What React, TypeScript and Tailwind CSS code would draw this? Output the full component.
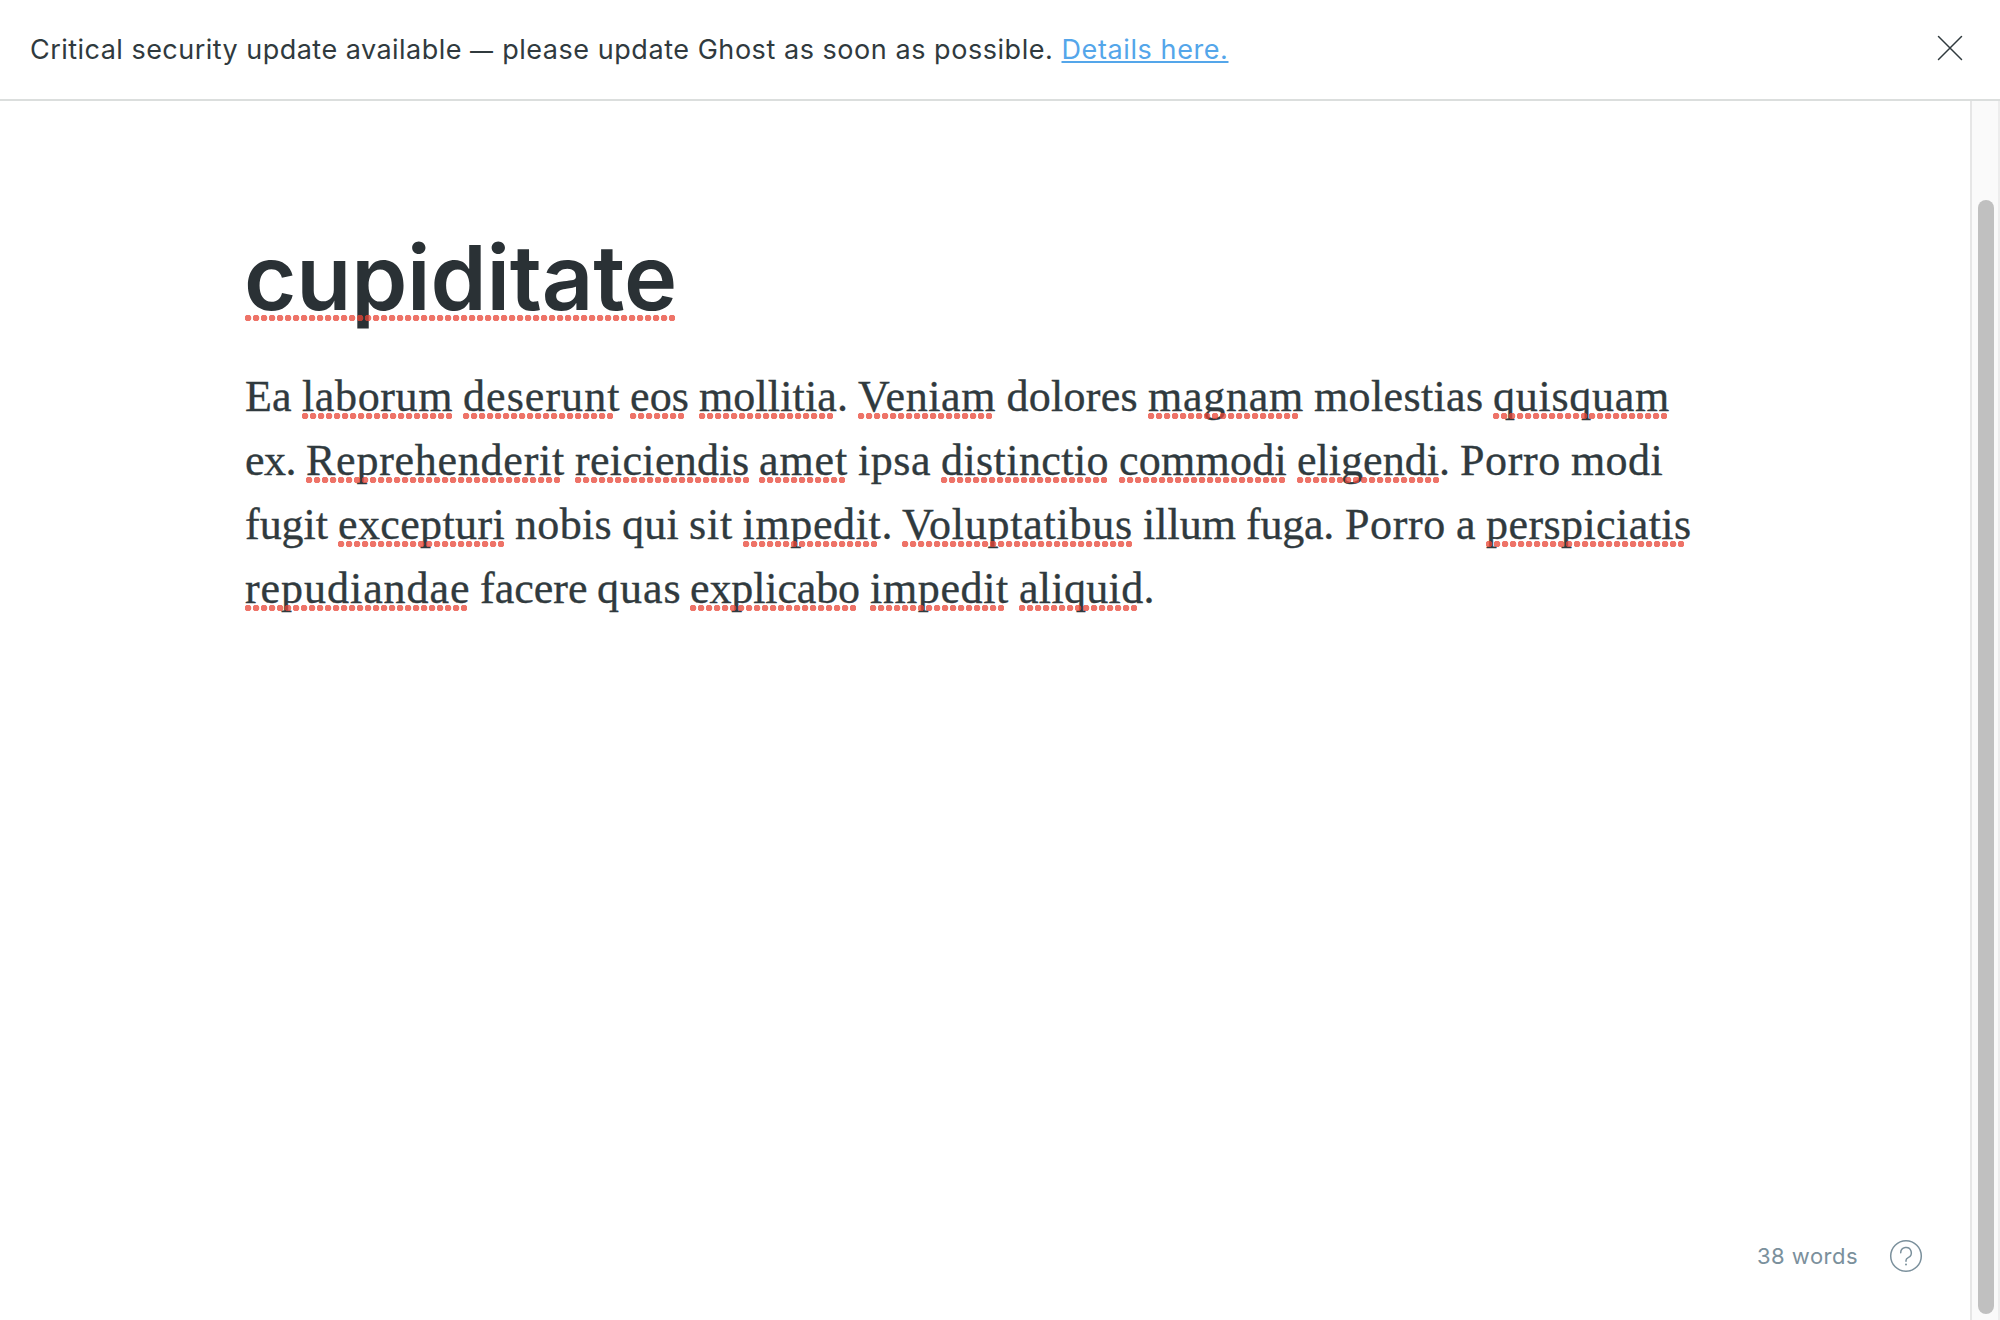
import React from 'react';

const SERIF = '"Liberation Serif"';
const SANS = 'Inter';

const canvas = document.createElement('canvas');

// Letter spacing that makes a run of text fill the given width.
function tracking(text: string, width: number, font: string) {
  const ctx = canvas.getContext('2d');
  if (!ctx) return 0;
  ctx.font = font;
  return (width - ctx.measureText(text).width) / text.length;
}

function Dots({ count, className }: { count: number; className: string }) {
  return (
    <span
      className={`absolute left-0 h-1.5 bg-[radial-gradient(circle_at_3px_3px,rgba(232,68,53,0.75)_2.9px,transparent_3.7px)] bg-[length:8px_6px] ${className}`}
      style={{ width: count * 8 - 2 }}
    />
  );
}

type Word = { t: string; x: number; w: number; dots?: number; stop?: boolean };

const w = (t: string, x: number, end: number, dots?: number, stop?: boolean): Word => ({
  t,
  x,
  w: end - x,
  dots,
  stop,
});

const lines: { words: Word[]; end: number }[] = [
  {
    end: 1700,
    words: [
      w('Ea', 245, 291.5),
      w('laborum', 302, 453, 19),
      w('deserunt', 463, 620.5, 19),
      w('eos', 630, 689, 7),
      w('mollitia', 699, 837, 17, true),
      w('Veniam', 858, 996, 17),
      w('dolores', 1006.5, 1138),
      w('magnam', 1148, 1304, 19),
      w('molestias', 1314, 1483.5),
      w('quisquam', 1493, 1670, 22),
    ],
  },
  {
    end: 1700,
    words: [
      w('ex.', 245, 296),
      w('Reprehenderit', 306, 565, 32),
      w('reiciendis', 575, 749.5, 22),
      w('amet', 759, 848, 11),
      w('ipsa', 858, 931),
      w('distinctio', 941, 1109, 21),
      w('commodi', 1119, 1287, 21),
      w('eligendi', 1297, 1439, 18, true),
      w('Porro', 1460, 1561),
      w('modi', 1571, 1663),
    ],
  },
  {
    end: 1700,
    words: [
      w('fugit', 245, 328),
      w('excepturi', 338, 505, 21),
      w('nobis', 515, 612),
      w('qui', 622, 679),
      w('sit', 689, 733),
      w('impedit', 742.5, 881.5, 17, true),
      w('Voluptatibus', 902, 1133, 29),
      w('illum', 1143, 1236),
      w('fuga.', 1246, 1334),
      w('Porro', 1345, 1446),
      w('a', 1456, 1476),
      w('perspiciatis', 1486, 1691.5, 25),
    ],
  },
  {
    end: 1700,
    words: [
      w('repudiandae', 245, 470.5, 28),
      w('facere', 480, 587.5),
      w('quas', 597, 681.5),
      w('explicabo', 690, 860, 21),
      w('impedit', 870, 1009, 17),
      w('aliquid', 1019, 1143.5, 15, true),
    ],
  },
];

function Line({ words, end }: { words: Word[]; end: number }) {
  return (
    <div className="flex h-16 whitespace-pre">
      {words.map((word, i) => {
        const next = i + 1 < words.length ? words[i + 1].x : end;
        return (
          <span key={word.x} className="relative block shrink-0" style={{ width: next - word.x }}>
            <span className="relative -top-0.5" style={{ letterSpacing: tracking(word.t, word.w, `44px ${SERIF}`) }}>
              {word.t}
            </span>
            {word.stop && <span className="relative -top-0.5">.</span>}{' '}
            {word.dots && <Dots count={word.dots} className="top-[46px]" />}
          </span>
        );
      })}
    </div>
  );
}

const before = 'Critical security update available ';
const after = ' please update Ghost as soon as possible. ';

export default function App() {
  return (
    <div className="flex h-[1320px] w-[2000px] flex-col overflow-hidden bg-white font-['Inter',sans-serif] text-[#303a3e]">
      <header className="flex h-[101px] shrink-0 items-center justify-between border-b-2 border-[#dbdedd] pr-[37px] pl-[30px]">
        <p className="whitespace-pre text-[27px] leading-10">
          <span style={{ letterSpacing: tracking(before, 440, `27px ${SANS}`) }}>{before}</span>
          <span className="text-[23px] leading-none" style={{ letterSpacing: tracking('—', 24, `23px ${SANS}`) }}>
            —
          </span>
          <span style={{ letterSpacing: tracking(after, 567.5, `27px ${SANS}`) }}>{after}</span>
          <a
            href="#details"
            className="text-[#54a6ea] underline decoration-2 underline-offset-[2px] [text-decoration-skip-ink:none]"
            style={{ letterSpacing: tracking('Details here.', 167, `27px ${SANS}`) }}
          >
            Details here.
          </a>
        </p>
        <button aria-label="Close" className="-mt-[3px]">
          <svg width="26" height="26" viewBox="0 0 26 26" fill="none" stroke="#303a3e" strokeWidth="1.5" strokeLinecap="round">
            <path d="M1.5 1.5l23 23M24.5 1.5l-23 23" />
          </svg>
        </button>
      </header>
      <div className="flex min-h-0 flex-1">
        <main className="flex flex-1 flex-col justify-between">
          <article className="pt-[123px] pl-[245px]">
            <h1 className="relative h-[140px] text-[90px] leading-[107px] font-semibold text-[#2a3135]">
              <span className="-ml-px" style={{ letterSpacing: tracking('cupiditate', 433, `600 90px ${SANS}`) }}>
                cupiditate
              </span>
              <Dots count={54} className="top-[91px]" />
            </h1>
            <div className="mt-[3px] font-['Liberation_Serif',serif] text-[44px] leading-16 [-webkit-text-stroke:0.35px_#303a3e]">
              {lines.map((line, i) => (
                <Line key={i} {...line} />
              ))}
            </div>
          </article>
          <footer className="flex items-center justify-end pr-[47px] pb-[47px] text-[#7b909c]">
            <span className="mr-[31px] text-[22px] leading-8" style={{ letterSpacing: tracking('38 words', 101, `22px ${SANS}`) }}>
              38 words
            </span>
            <svg width="34" height="34" viewBox="0 0 34 34" fill="none" stroke="currentColor" strokeWidth="1.5" strokeLinecap="round" strokeLinejoin="round">
              <circle cx="17" cy="17" r="15.3" />
              <path d="M11.7 13.8a5.3 5.3 0 1 1 7.5 4.8c-1.5.7-2.2 1.5-2.2 2.9v.7" />
              <circle cx="17" cy="25.6" r="1" fill="currentColor" stroke="none" />
            </svg>
          </footer>
        </main>
        <aside className="w-[30px] shrink-0 border-x-2 border-l-[#e6e6e6] border-r-[#ededed] bg-[#fafafa] pt-[99px] pl-1.5">
          <div className="h-[1114px] w-4 rounded-full bg-[#c0c0c0]" />
        </aside>
      </div>
    </div>
  );
}
